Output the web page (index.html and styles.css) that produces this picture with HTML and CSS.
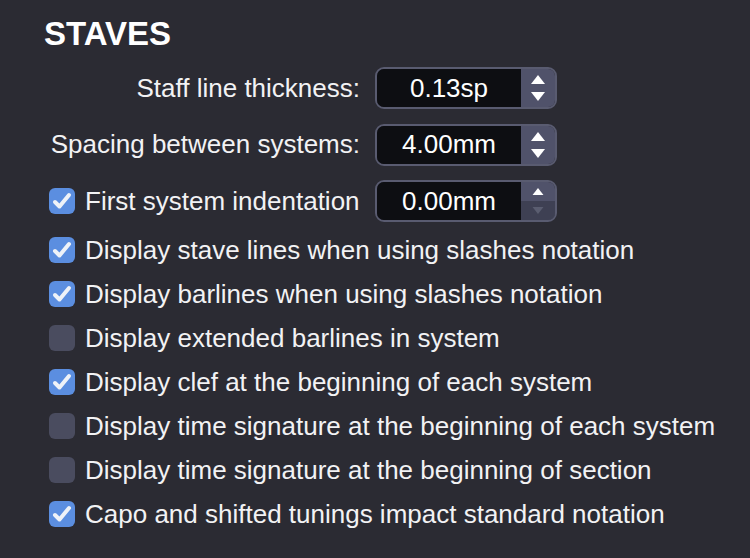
FILE: index.html
```html
<!DOCTYPE html>
<html lang="en">
<head>
  <meta charset="UTF-8">
  <title>Staves</title>
  <link rel="stylesheet" href="styles.css">
</head>
<body>
  <div class="panel">
    <div class="title">STAVES</div>
    <div class="fields">
      <div class="label">Staff line thickness:</div>
      <div class="spin">
        <div class="spin-value">0.13sp</div>
        <div class="spin-btns">
          <svg class="arrow" viewBox="0 0 14 9"><path d="M7 0 L14 9 L0 9 Z"/></svg>
          <svg class="arrow" viewBox="0 0 14 9"><path d="M0 0 L14 0 L7 9 Z"/></svg>
        </div>
      </div>
      <div class="label">Spacing between systems:</div>
      <div class="spin">
        <div class="spin-value">4.00mm</div>
        <div class="spin-btns">
          <svg class="arrow" viewBox="0 0 14 9"><path d="M7 0 L14 9 L0 9 Z"/></svg>
          <svg class="arrow" viewBox="0 0 14 9"><path d="M0 0 L14 0 L7 9 Z"/></svg>
        </div>
      </div>
      <div class="check label-left"><span class="box on"><svg viewBox="0 0 26 26"><path d="M6 14 L10.5 18.5 L20 7"/></svg></span>First system indentation</div>
      <div class="spin">
        <div class="spin-value">0.00mm</div>
        <div class="spin-btns split">
          <svg class="arrow" viewBox="0 0 14 9"><path d="M7 0 L14 9 L0 9 Z"/></svg>
          <svg class="arrow off" viewBox="0 0 14 9"><path d="M0 0 L14 0 L7 9 Z"/></svg>
        </div>
      </div>
    </div>
    <div class="checks">
      <div class="check"><span class="box on"><svg viewBox="0 0 26 26"><path d="M6 14 L10.5 18.5 L20 7"/></svg></span>Display stave lines when using slashes notation</div>
      <div class="check"><span class="box on"><svg viewBox="0 0 26 26"><path d="M6 14 L10.5 18.5 L20 7"/></svg></span>Display barlines when using slashes notation</div>
      <div class="check"><span class="box"></span>Display extended barlines in system</div>
      <div class="check"><span class="box on"><svg viewBox="0 0 26 26"><path d="M6 14 L10.5 18.5 L20 7"/></svg></span>Display clef at the beginning of each system</div>
      <div class="check"><span class="box"></span>Display time signature at the beginning of each system</div>
      <div class="check"><span class="box"></span>Display time signature at the beginning of section</div>
      <div class="check"><span class="box on"><svg viewBox="0 0 26 26"><path d="M6 14 L10.5 18.5 L20 7"/></svg></span>Capo and shifted tunings impact standard notation</div>
    </div>
  </div>
</body>
</html>
```
FILE: styles.css
```css
body { margin: 0; background: #2b2b33; color: #f2f2f4; font-family: "Liberation Sans", Arial, sans-serif; }
.panel { padding: 15px 0 0 44px; }
.title { font-size: 33px; font-weight: bold; line-height: 37px; color: #fff; }
.fields { display: grid; grid-template-columns: 316px 182px; column-gap: 15px; row-gap: 14.5px; margin-top: 15px; align-items: center; }
.label { font-size: 26px; text-align: right; white-space: nowrap; }
.spin { display: flex; height: 42px; box-sizing: border-box; border: 2px solid #595b70; border-radius: 9px; overflow: hidden; }
.spin-value { flex: 1; background: #0d0e12; display: flex; align-items: center; justify-content: center; font-size: 26px; color: #fff; }
.spin-btns { width: 34px; background: #50526a; display: flex; flex-direction: column; align-items: center; justify-content: center; gap: 8px; }
.spin-btns.split { gap: 0; justify-content: stretch; }
.spin-btns.split .arrow { flex: 1; width: 100%; padding: 6px 10px; box-sizing: border-box; }
.spin-btns.split .arrow.off { background: #3e4053; }
.arrow { width: 14px; height: 9px; fill: #fff; }
.arrow.off { fill: #5a5d70; }
.checks { margin-top: 6px; padding-left: 5px; }
.check { display: flex; align-items: center; gap: 10px; height: 44px; font-size: 26px; white-space: nowrap; }
.label-left { padding-left: 5px; height: 42px; }
.box { width: 26px; height: 26px; border-radius: 6px; background: #4a4c5f; flex: none; }
.box.on { background: #5b8ee0; }
.box svg { display: block; width: 26px; height: 26px; fill: none; stroke: #eef2f8; stroke-width: 4; stroke-linecap: round; stroke-linejoin: round; }
```
